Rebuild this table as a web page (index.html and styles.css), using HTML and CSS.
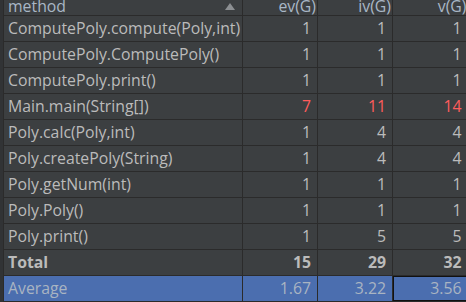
FILE: index.html
```html
<!DOCTYPE html>
<html lang="en">
<head>
<meta charset="UTF-8" />
<title>Method Metrics</title>
<link rel="stylesheet" href="styles.css">
</head>
<body>
  <table class="metrics">
    <colgroup>
      <col class="col-method">
      <col class="col-num">
      <col class="col-num">
      <col class="col-num">
    </colgroup>
    <thead>
      <tr>
        <th class="name sorted">method<span class="sort-arrow"></span></th>
        <th>ev(G)</th>
        <th>iv(G)</th>
        <th>v(G)</th>
      </tr>
    </thead>
    <tbody>
      <tr><td class="name">ComputePoly.compute(Poly,int)</td><td>1</td><td>1</td><td>1</td></tr>
      <tr><td class="name">ComputePoly.ComputePoly()</td><td>1</td><td>1</td><td>1</td></tr>
      <tr><td class="name">ComputePoly.print()</td><td>1</td><td>1</td><td>1</td></tr>
      <tr><td class="name">Main.main(String[])</td><td class="warn">7</td><td class="warn">11</td><td class="warn">14</td></tr>
      <tr><td class="name">Poly.calc(Poly,int)</td><td>1</td><td>4</td><td>4</td></tr>
      <tr><td class="name">Poly.createPoly(String)</td><td>1</td><td>4</td><td>4</td></tr>
      <tr><td class="name">Poly.getNum(int)</td><td>1</td><td>1</td><td>1</td></tr>
      <tr><td class="name">Poly.Poly()</td><td>1</td><td>1</td><td>1</td></tr>
      <tr><td class="name">Poly.print()</td><td>1</td><td>5</td><td>5</td></tr>
      <tr class="total"><td class="name">Total</td><td>15</td><td>29</td><td>32</td></tr>
      <tr class="selected"><td class="name">Average</td><td>1.67</td><td>3.22</td><td class="focused">3.56</td></tr>
    </tbody>
  </table>
</body>
</html>
```

FILE: styles.css
```css
* {
  box-sizing: border-box;
}
body {
  margin: 0;
  background: #313335;
  color: #bbbbbb;
  font-family: "Open Sans", "Noto Sans", sans-serif;
  font-size: 15.8px;
  overflow: hidden;
}
.metrics {
  margin-left: 3px;
  width: 463px;
  border-collapse: collapse;
  table-layout: fixed;
  background: #3c3f41;
  border-left: 1px solid #2b2b2b;
}
.col-method {
  width: 239px;
}
.col-num {
  width: 75px;
}
th, td {
  padding: 0 6px 0 4px;
  text-align: right;
  white-space: nowrap;
  overflow: hidden;
  border-right: 1px solid #2b2b2b;
  border-bottom: 1px solid #2b2b2b;
}
th:last-child, td:last-child {
  border-right: none;
}
th {
  height: 15px;
  line-height: 12px;
  font-weight: normal;
  color: #a9b7c6;
  padding-right: 1px;
  vertical-align: top;
}
td {
  height: 26px;
  line-height: 25px;
}
.name {
  text-align: left;
}
th.sorted {
  position: relative;
}
.sort-arrow {
  position: absolute;
  right: 7px;
  top: 3px;
  width: 0;
  height: 0;
  border-left: 5px solid transparent;
  border-right: 5px solid transparent;
  border-bottom: 7px solid #8c8f92;
}
.warn {
  color: #ff5c5c;
}
.total td {
  font-weight: bold;
}
.selected td {
  background: #4b6eaf;
  color: #a9b4c2;
}
.selected td.focused {
  box-shadow: inset 0 0 0 1px #111111;
}
```
